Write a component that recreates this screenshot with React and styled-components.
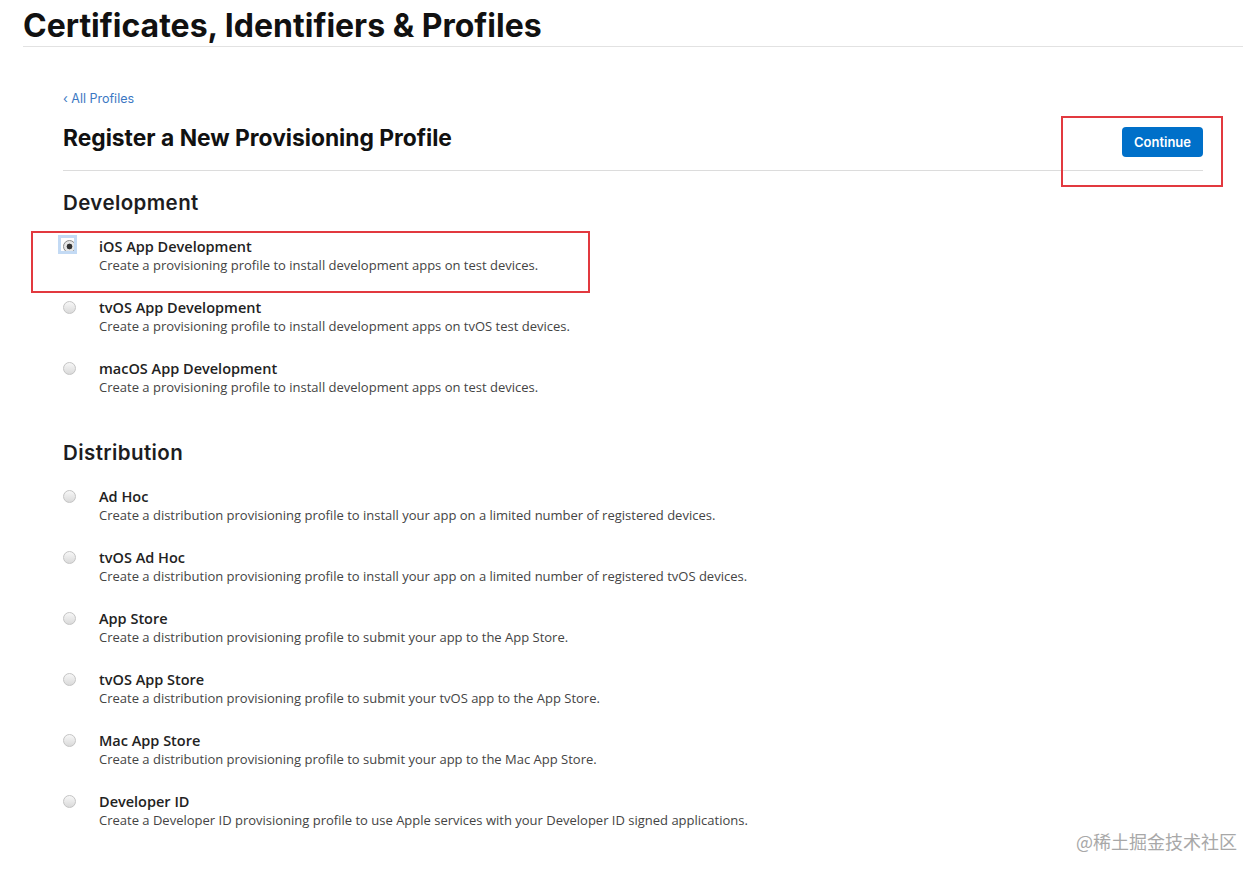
import React from "react";
import styled, { createGlobalStyle } from "styled-components";

const Global = createGlobalStyle`
  body {
    margin: 0;
    background: #ffffff;
    font-family: "Inter", "Liberation Sans", sans-serif;
    color: #1d1d1f;
  }
`;

const Page = styled.div`
  position: relative;
  width: 1260px;
  min-height: 875px;
  background: #fff;
`;

const Header = styled.header`
  margin: 0 17px 0 23px;
  padding-top: 6px;
  border-bottom: 1px solid #e2e2e2;
`;

const PageTitle = styled.h1`
  margin: 0;
  font-size: 32px;
  line-height: 40px;
  font-weight: 700;
  color: #111;
`;

const Main = styled.main`
  width: 1140px;
  margin: 0 0 0 63px;
  padding-top: 44px;
`;

const Back = styled.a`
  display: block;
  font-size: 12.5px;
  line-height: 16px;
  color: #3c78c3;
  text-decoration: none;
`;

const TitleRow = styled.div`
  display: flex;
  align-items: flex-start;
  justify-content: space-between;
  padding: 16px 0 13px;
  border-bottom: 1px solid #dcdcdc;
`;

const Title = styled.h2`
  margin: 0;
  font-size: 22.8px;
  line-height: 30px;
  font-weight: 700;
  color: #111;
`;

const Highlight = styled.div`
  position: absolute;
  border: 2px solid #e2393f;
  pointer-events: none;
`;

const Button = styled.button`
  margin-top: 4px;
  height: 30px;
  padding: 0 12px;
  border: none;
  border-radius: 4px;
  background: #0070c9;
  color: #fff;
  font-family: "Inter", "Liberation Sans", sans-serif;
  font-size: 13px;
  font-weight: 600;
  cursor: pointer;
`;

const Section = styled.section`
  padding-top: ${(p) => p.$top}px;
`;

const SectionTitle = styled.h3`
  margin: 0 0 21px;
  font-size: 20.5px;
  line-height: 26px;
  font-weight: 600;
  letter-spacing: 0.4px;
  color: #1d1d1f;
`;

const Options = styled.div`
  display: flex;
  flex-direction: column;
  gap: 23px;
`;

const Option = styled.label`
  display: grid;
  grid-template-columns: 36px 1fr;
  align-items: start;
  cursor: pointer;
`;

const Radio = styled.span`
  position: relative;
  margin-top: 3px;
  width: 13px;
  height: 13px;
  border-radius: 50%;
  border: 1px solid #c4c4c4;
  box-sizing: border-box;
  background: linear-gradient(#f7f7f7, #dadada);
  ${(p) =>
    p.$checked &&
    `
    border-color: #8a8a8a;
    background: radial-gradient(circle, #333 0 2.6px, #e6e6e6 3.2px);
    &::before {
      content: "";
      position: absolute;
      left: -6px;
      top: -6px;
      width: 19px;
      height: 19px;
      box-sizing: border-box;
      border: 3px solid #c3daf4;
    }
  `}
`;

const Text = styled.div`
  display: flex;
  flex-direction: column;
`;

const Label = styled.span`
  font-family: "Open Sans", "Liberation Sans", sans-serif;
  font-size: 14.5px;
  line-height: 19px;
  font-weight: 600;
  color: #222;
`;

const Desc = styled.span`
  font-family: "Open Sans", "Liberation Sans", sans-serif;
  font-size: 13px;
  line-height: 19px;
  color: #444;
`;

const Watermark = styled.div`
  position: absolute;
  right: 23px;
  top: 828px;
  font-family: "Noto Sans CJK SC", sans-serif;
  font-size: 18px;
  color: #a8a8a8;
`;

const development = [
  ["iOS App Development", "Create a provisioning profile to install development apps on test devices.", true],
  ["tvOS App Development", "Create a provisioning profile to install development apps on tvOS test devices."],
  ["macOS App Development", "Create a provisioning profile to install development apps on test devices."],
];

const distribution = [
  ["Ad Hoc", "Create a distribution provisioning profile to install your app on a limited number of registered devices."],
  ["tvOS Ad Hoc", "Create a distribution provisioning profile to install your app on a limited number of registered tvOS devices."],
  ["App Store", "Create a distribution provisioning profile to submit your app to the App Store."],
  ["tvOS App Store", "Create a distribution provisioning profile to submit your tvOS app to the App Store."],
  ["Mac App Store", "Create a distribution provisioning profile to submit your app to the Mac App Store."],
  ["Developer ID", "Create a Developer ID provisioning profile to use Apple services with your Developer ID signed applications."],
];

function OptionList({ items }) {
  return (
    <Options>
      {items.map(([label, desc, checked]) => (
        <Option key={label}>
          <Radio $checked={checked} />
          <Text>
            <Label>{label}</Label>
            <Desc>{desc}</Desc>
          </Text>
        </Option>
      ))}
    </Options>
  );
}

export default function App() {
  return (
    <Page>
      <Global />
      <Header>
        <PageTitle>Certificates, Identifiers &amp; Profiles</PageTitle>
      </Header>
      <Main>
        <Back href="#">‹ All Profiles</Back>
        <TitleRow>
          <Title>Register a New Provisioning Profile</Title>
          <Button>Continue</Button>
        </TitleRow>
        <Section $top={19}>
          <SectionTitle>Development</SectionTitle>
          <OptionList items={development} />
        </Section>
        <Section $top={43}>
          <SectionTitle>Distribution</SectionTitle>
          <OptionList items={distribution} />
        </Section>
      </Main>
      <Highlight style={{ left: 1061, top: 116, width: 158, height: 67 }} />
      <Highlight style={{ left: 31, top: 231, width: 555, height: 58 }} />
      <Watermark>@稀土掘金技术社区</Watermark>
    </Page>
  );
}
